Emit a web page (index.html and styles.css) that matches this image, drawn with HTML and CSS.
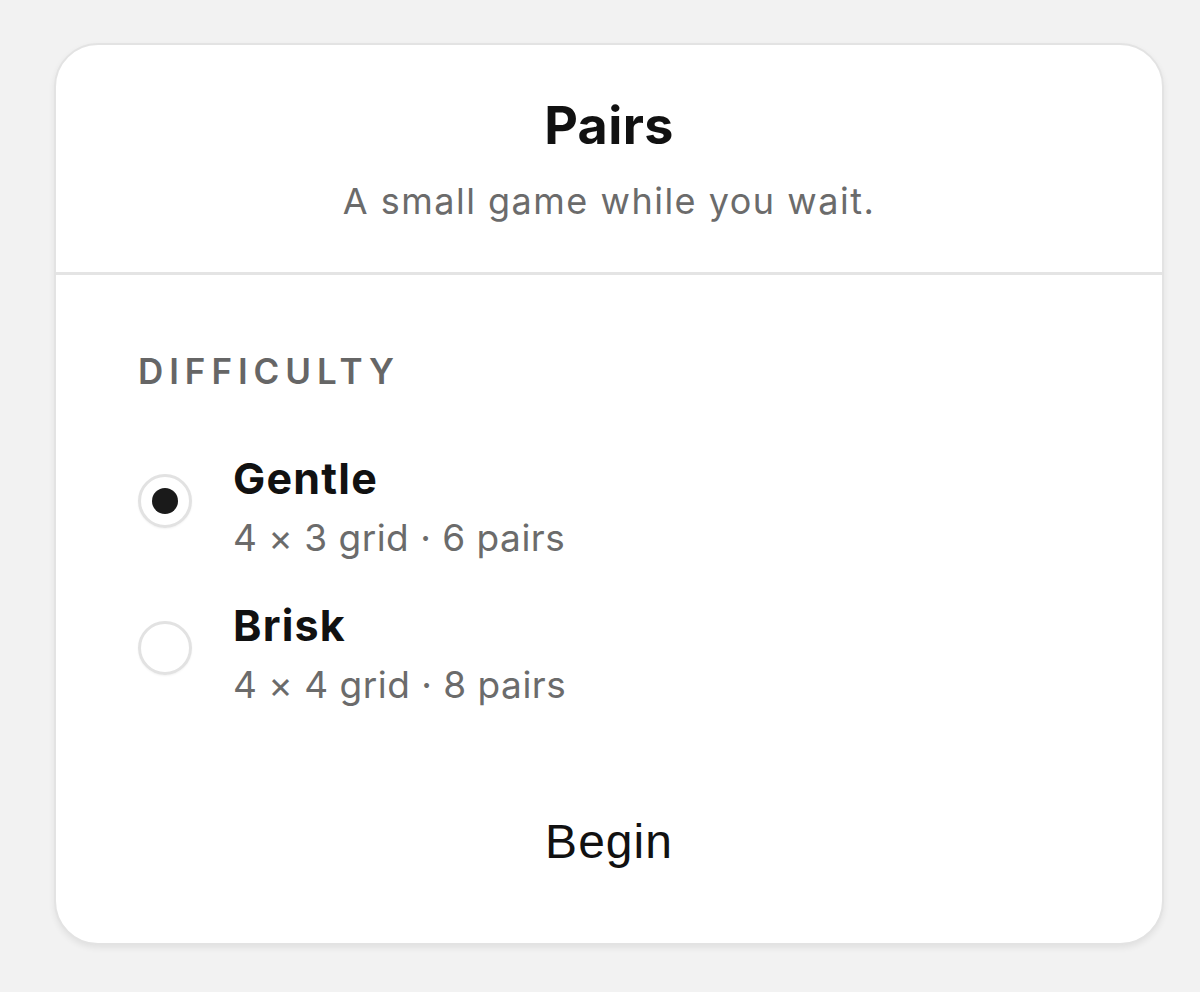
FILE: index.html
```html
<!DOCTYPE html>
<html lang="en">
<head>
  <meta charset="UTF-8">
  <title>Pairs</title>
  <link rel="stylesheet" href="styles.css">
</head>
<body>
  <div class="page">
    <div class="card">
      <div class="card-head">
        <h1>Pairs</h1>
        <p class="sub">A small game while you wait.</p>
      </div>

      <div class="card-body">
        <div class="label">DIFFICULTY</div>

        <div class="options">
          <label class="option">
            <span class="radio checked"></span>
            <span class="option-text">
              <span class="option-name">Gentle</span>
              <span class="option-desc">4 × 3 grid · 6 pairs</span>
            </span>
          </label>
          <label class="option">
            <span class="radio"></span>
            <span class="option-text">
              <span class="option-name">Brisk</span>
              <span class="option-desc">4 × 4 grid · 8 pairs</span>
            </span>
          </label>
        </div>

        <button class="begin">Begin</button>
      </div>
    </div>
  </div>
</body>
</html>
```

FILE: styles.css
```css
html, body {
  margin: 0;
  padding: 0;
  background: #f2f2f2;
  font-family: Inter, 'Noto Sans', sans-serif;
  color: #111;
}

.page {
  padding: 43px 36px 48px 54px;
}

.card {
  background: #fff;
  border: 2px solid #e3e3e3;
  border-radius: 44px;
  box-shadow: 0 3px 6px rgba(0, 0, 0, 0.07);
  overflow: hidden;
}

.card-head {
  text-align: center;
  padding: 51px 20px 49px;
  border-bottom: 3px solid #e4e4e4;
}

h1 {
  margin: 0;
  font-size: 52px;
  font-weight: 700;
  line-height: 60px;
  letter-spacing: 0.4px;
}

.sub {
  margin: 23px 0 0;
  font-size: 36px;
  line-height: 44px;
  letter-spacing: 1.5px;
  color: #6b6b6b;
}

.card-body {
  padding: 76px 82px 74px;
}

.label {
  font-size: 35px;
  line-height: 41px;
  font-weight: 600;
  letter-spacing: 0.17em;
  color: #666;
}

.options {
  display: flex;
  flex-direction: column;
  gap: 40px;
  margin-top: 62px;
}

.option {
  display: flex;
  align-items: flex-start;
  gap: 41px;
  cursor: pointer;
}

.radio {
  flex: none;
  width: 48px;
  height: 48px;
  margin-top: 20px;
  border: 3px solid #e2e2e2;
  border-radius: 50%;
  display: flex;
  align-items: center;
  justify-content: center;
  box-shadow: 0 1px 2px rgba(0, 0, 0, 0.05);
}

.radio.checked::after {
  content: "";
  width: 26px;
  height: 26px;
  border-radius: 50%;
  background: #1a1a1a;
}

.option-text {
  display: flex;
  flex-direction: column;
  gap: 12px;
}

.option-name {
  font-size: 43px;
  line-height: 48px;
  font-weight: 700;
  letter-spacing: 1.2px;
}

.option-desc {
  font-size: 37px;
  line-height: 47px;
  letter-spacing: 0.5px;
  color: #6b6b6b;
}

.begin {
  display: block;
  margin: 106px auto 0;
  padding: 0;
  border: none;
  background: none;
  font-family: 'Liberation Sans', Arial, sans-serif;
  font-size: 48px;
  letter-spacing: 1px;
  color: #111;
  cursor: pointer;
}
```
